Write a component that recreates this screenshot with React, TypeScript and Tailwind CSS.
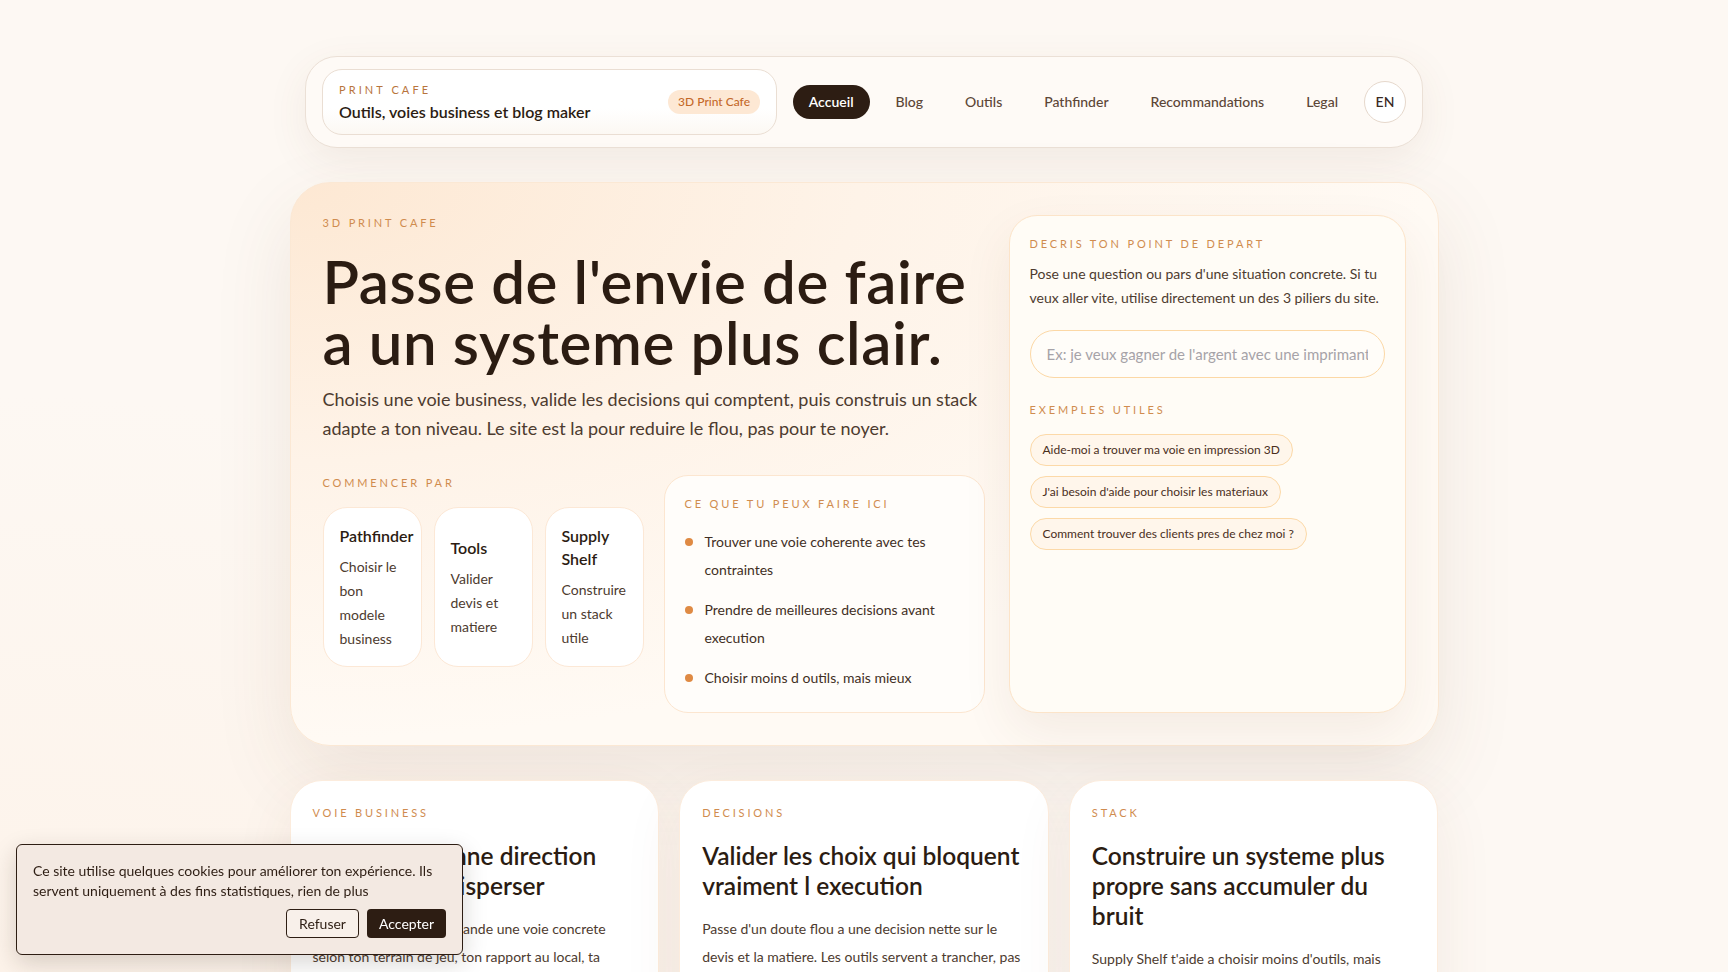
import { useState } from 'react'

const nav = ['Accueil', 'Blog', 'Outils', 'Pathfinder', 'Recommandations', 'Legal']

const starts = [
  { title: 'Pathfinder', desc: 'Choisir le bon modele business' },
  { title: 'Tools', desc: 'Valider devis et matiere' },
  { title: 'Supply Shelf', desc: 'Construire un stack utile' },
]

const todo = [
  'Trouver une voie coherente avec tes contraintes',
  'Prendre de meilleures decisions avant execution',
  'Choisir moins d outils, mais mieux',
]

const examples = [
  'Aide-moi a trouver ma voie en impression 3D',
  "J'ai besoin d'aide pour choisir les materiaux",
  'Comment trouver des clients pres de chez moi ?',
]

const pillars = [
  {
    eyebrow: 'Voie business',
    title: 'Trouver la bonne direction sans trop te disperser',
    desc: 'Le Pathfinder te recommande une voie concrete selon ton terrain de jeu, ton rapport au local, ta capacite et ton niveau.',
  },
  {
    eyebrow: 'Decisions',
    title: 'Valider les choix qui bloquent vraiment l execution',
    desc: "Passe d'un doute flou a une decision nette sur le devis et la matiere. Les outils servent a trancher, pas a compliquer.",
  },
  {
    eyebrow: 'Stack',
    title: 'Construire un systeme plus propre sans accumuler du bruit',
    desc: "Supply Shelf t'aide a choisir moins d'outils, mais mieux choisis pour ton activite.",
  },
]

function Eyebrow({ children, className = '' }: { children: React.ReactNode; className?: string }) {
  return (
    <p className={`text-[11px] leading-4 uppercase tracking-[0.26em] text-[#d08c4f] ${className}`}>{children}</p>
  )
}

function Header() {
  return (
    <header className="mx-auto flex w-[1118px] items-center justify-between rounded-[32px] border border-[#ebe0d6] bg-[#fefaf6] px-4 py-3 shadow-[0_12px_40px_rgba(120,80,50,0.08)]">
      <div className="flex h-[66px] w-[455px] items-center justify-between rounded-[20px] border border-[#eaded3] bg-[linear-gradient(180deg,#ffffff_0%,#ffffff_60%,#fcf8f3_100%)] px-4">
        <div>
          <p className="text-[11px] leading-4 uppercase tracking-[0.28em] text-[#b8743c]">Print Cafe</p>
          <p className="mt-1 text-base leading-5 font-semibold text-[#2b1c12]">Outils, voies business et blog maker</p>
        </div>
        <span className="rounded-full bg-[#fde8d4] px-2.5 py-1 text-xs font-medium text-[#c4692a]">3D Print Cafe</span>
      </div>
      <nav className="flex items-center gap-[10px]">
        {nav.map((item, i) => (
          <a
            key={item}
            href="#"
            className={
              i === 0
                ? 'flex h-[34px] items-center rounded-full bg-[#2d1d13] px-4 text-sm font-semibold text-white'
                : 'flex h-[34px] items-center rounded-full px-4 text-sm font-medium text-[#5c4637]'
            }
          >
            {item}
          </a>
        ))}
        <button
          type="button"
          className="flex h-[42px] w-[42px] items-center justify-center rounded-full border border-[#e6d8cc] bg-white text-sm font-medium text-[#3a2a1f]"
        >
          EN
        </button>
      </nav>
    </header>
  )
}

function Hero() {
  return (
    <section className="mt-[34px] grid grid-cols-[1fr_397px] gap-6 rounded-[40px] border border-[#fbe8d4] bg-[radial-gradient(ellipse_at_top_left,#fde8d3_0%,#fef3e8_35%,#fffaf4_70%)] p-8 shadow-[0_30px_80px_rgba(110,70,40,0.10)]">
      <div>
        <Eyebrow>3D Print Cafe</Eyebrow>
        <h1 className="mt-5 text-[60px] leading-[61px] font-semibold tracking-[0.01em] text-[#2b1c12]">
          Passe de l'envie de faire
          <br />a un systeme plus clair.
        </h1>
        <p className="mt-3 text-lg leading-[29px] text-[#4d3b2f]">
          Choisis une voie business, valide les decisions qui comptent, puis construis un stack adapte a ton niveau. Le
          site est la pour reduire le flou, pas pour te noyer.
        </p>

        <div className="mt-[32px] grid grid-cols-2 gap-5">
          <div>
            <Eyebrow>Commencer par</Eyebrow>
            <div className="mt-4 grid grid-cols-3 gap-3">
              {starts.map((s) => (
                <div
                  key={s.title}
                  className="flex h-[160px] flex-col justify-center rounded-3xl border border-[#fce8d6] bg-white px-4"
                >
                  <p className="text-base leading-[23px] font-semibold text-[#2b1c12]">{s.title}</p>
                  <p className="mt-2 text-sm leading-6 text-[#4d3b2f]">{s.desc}</p>
                </div>
              ))}
            </div>
          </div>

          <div className="rounded-3xl border border-[#fce6d0] bg-[#fffdfa] p-5">
            <Eyebrow>Ce que tu peux faire ici</Eyebrow>
            <ul className="mt-4 space-y-3">
              {todo.map((t) => (
                <li key={t} className="flex gap-3 text-sm leading-7 text-[#3f2f24]">
                  <span className="mt-[10px] h-2 w-2 shrink-0 rounded-full bg-[#df8a43]" />
                  <span>{t}</span>
                </li>
              ))}
            </ul>
          </div>
        </div>
      </div>

      <aside className="rounded-[28px] border border-[#fce4c9] bg-[#fffcf6] p-5 shadow-[0_20px_50px_rgba(110,70,40,0.08)]">
        <Eyebrow>Decris ton point de depart</Eyebrow>
        <p className="mt-2.5 text-sm leading-6 text-[#4d3b2f]">
          Pose une question ou pars d'une situation concrete. Si tu veux aller vite, utilise directement un des 3
          piliers du site.
        </p>
        <input
          type="text"
          placeholder="Ex: je veux gagner de l'argent avec une imprimante 3D"
          className="mt-5 h-12 w-full rounded-full border border-[#fcd8a6] bg-[#fffdf9] px-4 text-[15px] text-[#2b1c12] outline-none placeholder:text-[#a6a3a8]"
        />
        <Eyebrow className="mt-6">Exemples utiles</Eyebrow>
        <div className="mt-4 flex flex-col items-start gap-2.5">
          {examples.map((e) => (
            <button
              key={e}
              type="button"
              className="flex h-8 items-center rounded-full border border-[#fcd9a8] bg-[#fff6eb] px-3 text-xs text-[#4a2e1c]"
            >
              {e}
            </button>
          ))}
        </div>
      </aside>
    </section>
  )
}

function Pillars() {
  return (
    <div className="mt-[34px] grid grid-cols-3 gap-5">
      {pillars.map((p) => (
        <article
          key={p.eyebrow}
          className="rounded-[32px] border border-[#fcecdd] bg-white p-[22px] pt-6 shadow-[0_20px_60px_rgba(110,70,40,0.08)]"
        >
          <Eyebrow>{p.eyebrow}</Eyebrow>
          <h2 className="mt-5 text-[24.5px] leading-[30px] font-semibold text-[#2b1c12]">{p.title}</h2>
          <p className="mt-3.5 text-sm leading-7 text-[#4d3b2f]">{p.desc}</p>
        </article>
      ))}
    </div>
  )
}

function CookieBanner() {
  const [open, setOpen] = useState(true)
  if (!open) return null
  return (
    <div className="fixed bottom-[17px] left-4 w-[447px] rounded-md border border-[#2d1d13] bg-[#f3e9e2] px-4 pt-4 pb-4 shadow-[0_8px_24px_rgba(40,25,15,0.18)]">
      <p className="text-sm leading-5 text-[#2d1d13]">
        Ce site utilise quelques cookies pour améliorer ton expérience. Ils servent uniquement à des fins
        statistiques, rien de plus
      </p>
      <div className="mt-2 flex justify-end gap-2">
        <button
          type="button"
          onClick={() => setOpen(false)}
          className="h-[29px] rounded border border-[#2d1d13] bg-[#f8f0ea] px-3 text-sm text-[#2d1d13]"
        >
          Refuser
        </button>
        <button
          type="button"
          onClick={() => setOpen(false)}
          className="h-[29px] rounded bg-[#2d1d13] px-3 text-sm text-white"
        >
          Accepter
        </button>
      </div>
    </div>
  )
}

export default function App() {
  return (
    <div className="min-h-screen bg-[radial-gradient(ellipse_at_bottom_left,#fdf2e8_0%,#fdf8f3_45%)] font-['Lato','Noto_Sans',sans-serif] text-[#2b1c12]">
      <div className="mx-auto w-[1149px] pt-14 pb-16">
        <Header />
        <Hero />
        <Pillars />
      </div>
      <CookieBanner />
    </div>
  )
}
